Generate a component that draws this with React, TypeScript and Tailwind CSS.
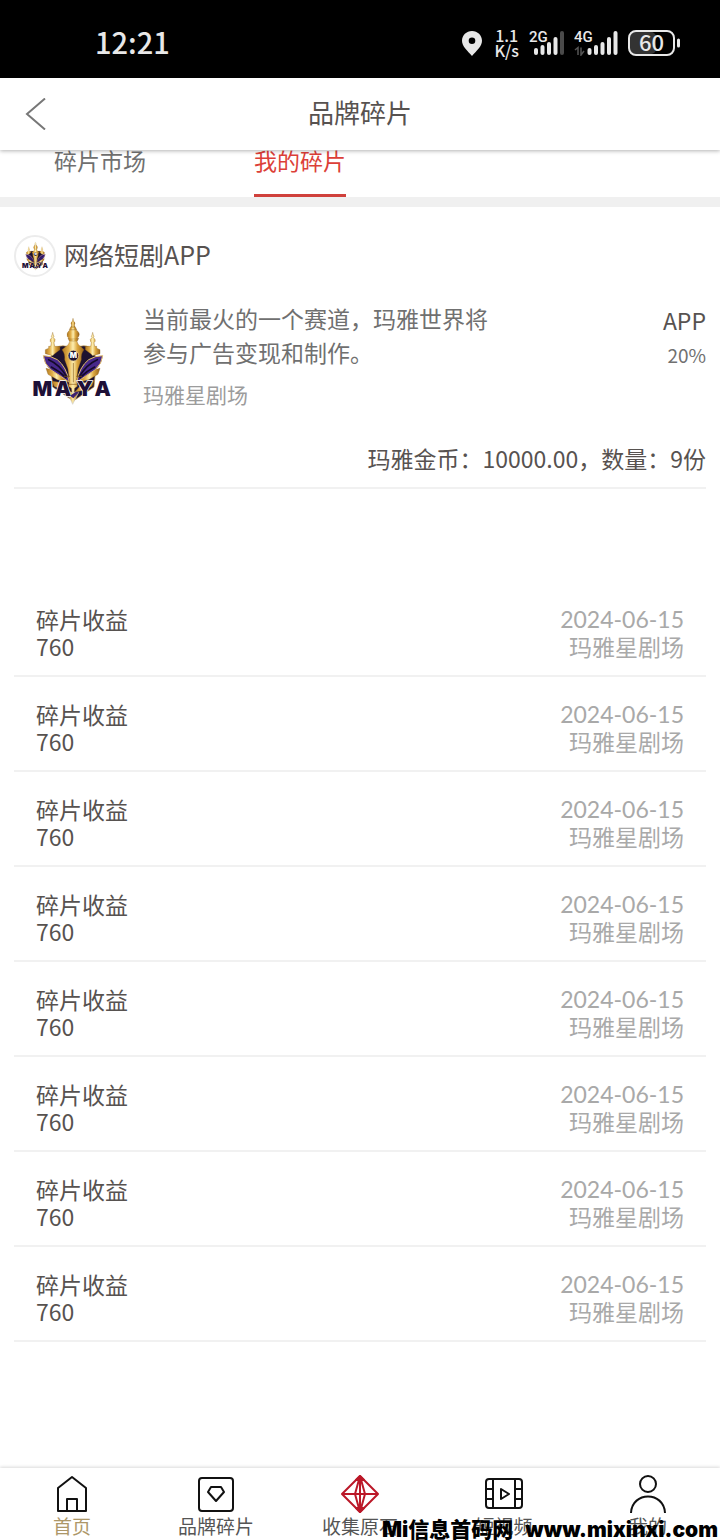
import type { ReactNode } from "react";

type Income = { title: string; amount: number; date: string; source: string };

const incomes: Income[] = Array.from({ length: 8 }, () => ({
  title: "碎片收益",
  amount: 760,
  date: "2024-06-15",
  source: "玛雅星剧场",
}));

function MayaLogo({ className, viewBox }: { className: string; viewBox: string }) {
  return (
    <svg className={className} viewBox={viewBox} role="img" aria-label="MAYA">
      <defs>
        <linearGradient id="gold" x1="0" y1="0" x2="1" y2="0">
          <stop offset="0" stopColor="#b07820" />
          <stop offset="0.3" stopColor="#e3b04a" />
          <stop offset="0.5" stopColor="#fdeeb0" />
          <stop offset="0.7" stopColor="#dba63e" />
          <stop offset="1" stopColor="#96611a" />
        </linearGradient>
      </defs>

      {/* dark shield */}
      <path d="M104 132 Q120 118 140 124 L160 130 L180 124 Q200 118 214 132 L230 160 L222 246 L160 288 L98 246 L90 160Z" fill="#1d1230" stroke="#caa04a" strokeWidth="2" />

      {/* side towers on their brackets */}
      <g fill="url(#gold)" stroke="#8a5a16" strokeWidth="1">
        <path d="M98 82 L100 90 Q104 94 100 98 Q108 102 104 110 L102 113 L104 124 H120 V134 L104 146 L98 152 L76 146 V134 L86 130 V124 H92 L94 113 L91 110 Q88 102 96 98 Q92 94 96 90Z" />
        <path d="M218 82 L216 90 Q212 94 216 98 Q208 102 212 110 L214 113 L212 124 H196 V134 L212 146 L218 152 L240 146 V134 L230 130 V124 H224 L222 113 L225 110 Q228 102 220 98 Q224 94 220 90Z" />
      </g>

      {/* lower gold ribs */}
      <g fill="url(#gold)" stroke="#8a5a16" strokeWidth="1">
        <path d="M78 190 L100 196 L128 214 L142 232 L112 224 L84 208Z" />
        <path d="M240 190 L218 196 L190 214 L176 232 L206 224 L234 208Z" />
        <path d="M96 228 L130 234 L154 262 L128 256 L102 244Z" />
        <path d="M222 228 L188 234 L164 262 L190 256 L216 244Z" />
      </g>

      {/* wings */}
      <g fill="#47288a" stroke="#e3bd68" strokeWidth="3" strokeLinejoin="round">
        <path d="M70 152 Q92 152 112 164 Q140 186 148 232 Q118 210 92 194 Q72 176 70 152Z" />
        <path d="M248 152 Q226 152 206 164 Q178 186 170 232 Q200 210 226 194 Q246 176 248 152Z" />
      </g>
      <g fill="none" stroke="#150b29" strokeWidth="5" strokeLinecap="round">
        <path d="M86 164 Q118 178 140 214" />
        <path d="M232 164 Q200 178 178 214" />
        <path d="M94 186 Q118 198 138 218" />
        <path d="M224 186 Q200 198 180 218" />
      </g>

      {/* centre tower and body */}
      <g fill="url(#gold)" stroke="#8a5a16" strokeWidth="1">
        <path d="M136 126 Q148 120 150 106 H170 Q172 120 184 126 L192 134 Q182 146 184 164 Q178 180 174 192 L170 226 L172 244 L164 250 L160 288 L154 250 L146 244 L148 226 L144 192 Q140 180 134 164 Q136 146 126 134Z" />
        <path d="M144 100 H176 L172 108 H148Z" />
        <path d="M150 74 H168 Q182 84 176 94 L170 102 H148 L142 94 Q138 84 150 74Z" />
        <path d="M152 66 H166 L170 74 H148Z" />
        <path d="M159 40 L161 49 Q168 54 163 60 L165 66 H153 L155 60 Q150 54 157 49Z" />
      </g>
      <path d="M132 214 H150 M168 214 H186 M144 238 H176 M160 174 V232" fill="none" stroke="#8a5a16" strokeWidth="2" />
      <circle cx="160" cy="152" r="16" fill="#1d1230" stroke="#f4dc9a" strokeWidth="2" />
      <text x="160" y="160" textAnchor="middle" className="fill-white font-['Inter'] text-[23px] font-black">
        M
      </text>

      {/* tip below the lettering */}
      <path d="M142 262 L176 262 L158 298Z" fill="url(#gold)" stroke="#cfcfcf" strokeWidth="2" />
      <g className="font-['Inter'] text-[62px] font-black" fill="#1e1037" stroke="#fff" strokeWidth="4" paintOrder="stroke" textAnchor="middle">
        <text x="67" y="274">M</text>
        <text x="129" y="274">A</text>
        <text x="194" y="274">Y</text>
        <text x="248" y="274">A</text>
      </g>
      <path d="M150 272 L160 280 L176 262 L168 260Z" fill="#3d2170" />
    </svg>
  );
}

function StatusBar() {
  return (
    <div className="flex h-[78px] items-center justify-between bg-black pt-2 pr-10 pl-[95px] text-[#e8e8e8]">
      <span className="pb-1 text-[29px] leading-8 font-medium">12:21</span>
      <div className="flex items-center">
        <svg className="mr-3 h-[25px] w-5" viewBox="0 0 20 25" aria-hidden="true">
          <path fillRule="evenodd" d="M10 0C4.400 0 0 4.300 0 9.700C0 15.500 5.500 19.500 10 25C14.500 19.500 20 15.500 20 9.700C20 4.300 15.600 0 10 0ZM10 6.500a3.300 3.300 0 1 1 0 6.600a3.300 3.300 0 0 1 0-6.600Z" fill="currentColor" />
        </svg>
        <div className="mr-[10px] text-center text-base leading-[15px] font-medium">
          <div>1.1</div>
          <div>K/s</div>
        </div>
        <svg className="mr-[10px] h-[26px] w-[35px]" viewBox="0 0 35 26" fill="currentColor" aria-label="2G">
          <text x="0" y="12" className="font-['Roboto'] text-[15px] font-medium">2G</text>
          <rect x="5" y="18" width="4" height="7" rx="2" />
          <rect x="11.500" y="15" width="4" height="10" rx="2" />
          <rect x="18" y="12" width="4" height="13" rx="2" />
          <rect x="24.500" y="7" width="4" height="18" rx="2" />
          <rect x="31" y="1" width="4" height="24" rx="2" fill="#4a4a4a" />
        </svg>
        <svg className="mr-[10px] h-[26px] w-11" viewBox="0 0 44 26" fill="currentColor" aria-label="4G">
          <text x="0" y="12" className="font-['Roboto'] text-[15px] font-medium">4G</text>
          <path d="M1 20 L4 17.500 V25 M7 17.500 V25 L10 21" fill="none" stroke="#555" strokeWidth="1.500" />
          <rect x="13.500" y="18" width="4" height="7" rx="2" />
          <rect x="20" y="15" width="4" height="10" rx="2" />
          <rect x="26.500" y="12" width="4" height="13" rx="2" />
          <rect x="33" y="7" width="4" height="18" rx="2" />
          <rect x="39.500" y="1" width="4" height="24" rx="2" />
        </svg>
        <svg className="h-[26px] w-[52px]" viewBox="0 0 52 26" aria-label="60">
          <rect x="2" y="2" width="26" height="22" rx="5" fill="#333" />
          <rect x="1" y="1" width="45" height="24" rx="7" fill="none" stroke="currentColor" strokeWidth="2" />
          <path d="M50.500 10 V16" stroke="currentColor" strokeWidth="3" strokeLinecap="round" />
          <text x="23.500" y="21" textAnchor="middle" fill="currentColor" className="text-[22px] font-medium">60</text>
        </svg>
      </div>
    </div>
  );
}

function NavItem({ label, active, children }: { label: string; active?: boolean; children: ReactNode }) {
  return (
    <a href="#" className={`flex flex-1 flex-col items-center text-[19px] leading-6 ${active ? "text-[#ad9768]" : "text-[#555]"}`}>
      <svg className="mt-[6px] h-10 w-10" viewBox="0 0 40 40" fill="none" stroke="#111" strokeWidth="2" strokeLinejoin="round" aria-hidden="true">
        {children}
      </svg>
      {label}
    </a>
  );
}

export default function App() {
  return (
    <div
      lang="zh-CN"
      className="relative flex min-h-screen flex-col bg-white font-['Noto_Sans_CJK_SC',sans-serif] text-[23px] leading-[27px] text-[#575250]"
    >
      <StatusBar />

      <header className="relative z-10 grid h-[72px] grid-cols-[1fr_auto_1fr] items-center bg-white px-6 shadow-[0_1px_4px_rgba(0,0,0,0.3)]">
        <button type="button" aria-label="返回" className="w-6">
          <svg className="h-8 w-6" viewBox="0 0 24 32" fill="none" stroke="#777" strokeWidth="2">
            <path d="M21 0.500 L3 16 L21 31.500" />
          </svg>
        </button>
        <h1 className="pb-1 text-[26px] leading-9">品牌碎片</h1>
      </header>

      <div className="flex h-[57px] border-b-10 border-[#f0f0f0] leading-5">
        <button type="button" className="flex w-[200px] justify-center text-[#707070]">
          碎片市场
        </button>
        <button type="button" className="flex w-[200px] justify-center text-[#dc3f38]">
          <span className="h-full border-b-3 border-[#d0413c]">我的碎片</span>
        </button>
      </div>

      <main className="px-[14px] pt-7">
        <section className="border-b-2 border-[#f1f1f1] pb-[15px]">
          <div className="flex items-center gap-2">
            <span className="flex size-[42px] items-center justify-center rounded-full border-2 border-[#ececec]">
              <MayaLogo className="size-[38px]" viewBox="-18 -5 345 345" />
            </span>
            <h2 className="pb-1 text-[25px] leading-9">网络短剧APP</h2>
          </div>

          <div className="mt-6 flex">
            <MayaLogo className="mt-1 mr-3 h-[110px] w-[117px] shrink-0" viewBox="-18 0 351 330" />
            <div className="max-w-[350px] text-[#707070]">
              <p className="leading-[34px]">当前最火的一个赛道，玛雅世界将参与广告变现和制作。</p>
              <p className="mt-3 text-[21px] text-[#9c9c9c]">玛雅星剧场</p>
            </div>
            <div className="mt-0.5 ml-auto text-right">
              <p className="leading-[34px]">APP</p>
              <p className="text-[19px] leading-9 text-[#707070]">20%</p>
            </div>
          </div>

          <p className="mt-[30px] text-right">玛雅金币：10000.00，数量：9份</p>
        </section>

        <ul className="mt-[93px]">
          {incomes.map((item, i) => (
            <li key={i} className="flex justify-between border-b-2 border-[#f1f1f1] px-[22px] pt-6 pb-[15px]">
              <div>
                <p>{item.title}</p>
                <p>{item.amount}</p>
              </div>
              <div className="text-right text-[#a9a9a9]">
                <p className="font-['Lato']">{item.date}</p>
                <p>{item.source}</p>
              </div>
            </li>
          ))}
        </ul>
      </main>

      <nav className="mt-auto flex h-[72px] bg-white shadow-[0_-1px_3px_rgba(0,0,0,0.15)]">
        <NavItem label="首页" active>
          <path d="M6 37 V14 L20 3 L34 14 V37Z M15 37 V25 H25 V37" />
        </NavItem>
        <NavItem label="品牌碎片">
          <rect x="3" y="4" width="34" height="33" rx="3" />
          <path d="M15 13 H25 L28 18 L20 27 L12 18Z" />
        </NavItem>
        <NavItem label="收集原石">
          <g stroke="#bb1828">
            <path d="M20 2 L38 20 L20 38 L2 20Z M2 20 H38 M20 2 V38 M20 2 L15 20 L20 38 M20 2 L25 20 L20 38" />
            <path d="M16 6 H24 L20 2Z M16 34 H24 L20 38Z" fill="#bb1828" />
          </g>
        </NavItem>
        <NavItem label="短视频">
          <rect x="2" y="5" width="36" height="29" rx="3" />
          <path d="M9 5 V34 M31 5 V34 M2 15 H9 M2 25 H9 M31 15 H38 M31 25 H38 M17 15 L25 20 L17 25Z" />
        </NavItem>
        <NavItem label="我的">
          <circle cx="20" cy="10" r="8" />
          <path d="M3 39 C4 17 36 17 37 39" />
        </NavItem>
      </nav>

      <p className="absolute right-0.5 bottom-0 flex items-baseline gap-3 font-['Inter','Noto_Sans_CJK_SC',sans-serif] text-[21px] leading-5 font-black whitespace-nowrap text-black">
        <span>Mi信息首码网</span>
        <span>www.mixinxi.com</span>
      </p>
    </div>
  );
}
